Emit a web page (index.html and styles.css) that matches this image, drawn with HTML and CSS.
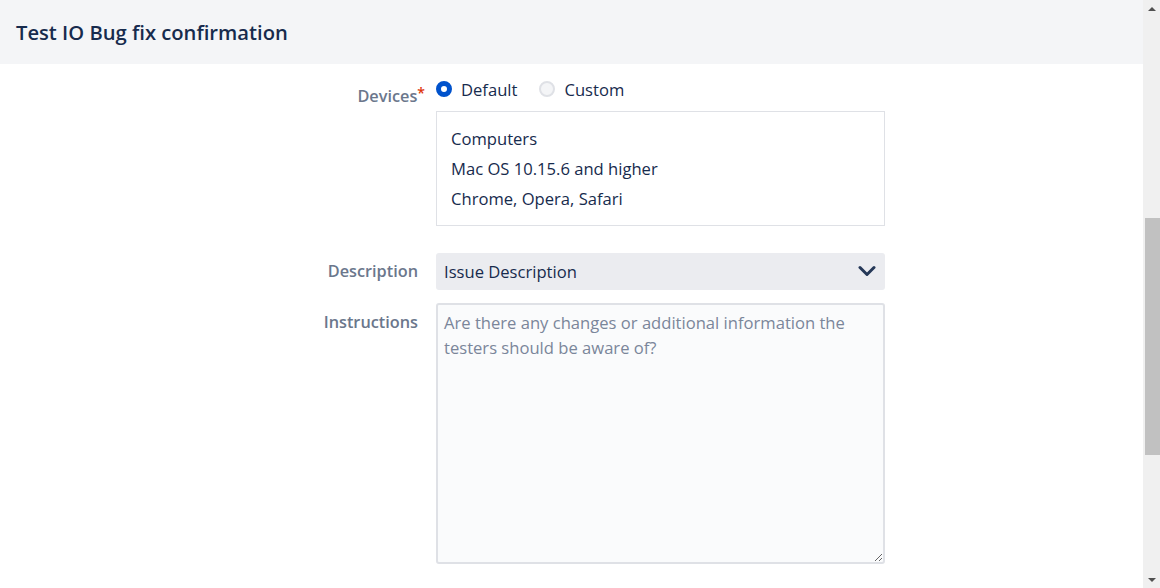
FILE: index.html
```html
<!DOCTYPE html>
<html lang="en">
<head>
<meta charset="utf-8">
<title>Test IO Bug fix confirmation</title>
<link rel="stylesheet" href="styles.css">
</head>
<body>
<div class="page">
  <div class="main">
    <header class="modal-header">
      <h1 class="title">Test IO Bug fix confirmation</h1>
    </header>
    <form class="form">
      <div class="row row-devices">
        <div class="label label-devices">Devices<span class="req">*</span></div>
        <div class="field">
          <div class="radios">
            <label class="radio"><span class="dot dot-on"></span><span>Default</span></label>
            <label class="radio"><span class="dot"></span><span>Custom</span></label>
          </div>
          <div class="device-box">
            <div>Computers</div>
            <div>Mac OS 10.15.6 and higher</div>
            <div>Chrome, Opera, Safari</div>
          </div>
        </div>
      </div>
      <div class="row row-desc">
        <div class="label label-desc">Description</div>
        <div class="field">
          <div class="select">
            <span>Issue Description</span>
            <svg class="chev" width="18" height="12" viewBox="0 0 18 12"><path d="M2 2.5 L9 9.5 L16 2.5" fill="none" stroke="#253858" stroke-width="3" stroke-linecap="round" stroke-linejoin="round"/></svg>
          </div>
        </div>
      </div>
      <div class="row row-instr">
        <div class="label label-instr">Instructions</div>
        <div class="field">
          <textarea class="textarea" placeholder="Are there any changes or additional information the testers should be aware of?"></textarea>
        </div>
      </div>
    </form>
  </div>
  <div class="scrollbar">
    <div class="sb-btn"><span class="arrow-up"></span></div>
    <div class="sb-track">
      <div class="sb-space-top"></div>
      <div class="sb-thumb"></div>
    </div>
    <div class="sb-btn"><span class="arrow-down"></span></div>
  </div>
</div>
</body>
</html>
```
FILE: styles.css
```css
* { box-sizing: border-box; }
html, body { margin: 0; padding: 0; }
body {
  font-family: "Open Sans", "Noto Sans", sans-serif;
  color: #172b4d;
  background: #fff;
}
.page {
  display: flex;
  width: 1160px;
  height: 588px;
  overflow: hidden;
}
.main {
  flex: 1;
  display: flex;
  flex-direction: column;
  background: #fff;
}
.modal-header {
  height: 64px;
  background: #f4f5f7;
  display: flex;
  align-items: center;
  padding-left: 16px;
}
.title {
  margin: 0;
  font-size: 20.2px;
  font-weight: 600;
  color: #172b4d;
}
.form {
  display: flex;
  flex-direction: column;
  padding-top: 15px;
}
.row {
  display: grid;
  grid-template-columns: 418px 449px;
  column-gap: 18px;
}
.label {
  text-align: right;
  font-size: 16.3px;
  font-weight: 600;
  color: #6b778c;
}
.label-devices { padding-top: 6px; margin-right: -7px; }
.req { color: #de350b; font-size: 14px; position: relative; top: -4px; }
.radios {
  display: flex;
  align-items: center;
  gap: 22px;
  height: 20px;
}
.radio {
  display: flex;
  align-items: center;
  gap: 9px;
  font-size: 16.6px;
  color: #172b4d;
}
.dot {
  width: 16px;
  height: 16px;
  border-radius: 50%;
  background: #f4f5f7;
  border: 2px solid #dfe1e6;
  display: inline-block;
}
.dot-on {
  background: #fff;
  border: 5px solid #0052cc;
}
.device-box {
  margin-top: 12px;
  border: 1px solid #dfe1e6;
  height: 115px;
  padding: 12px 14px;
  font-size: 16.6px;
  line-height: 30px;
  color: #172b4d;
}
.row-desc { margin-top: 27px; }
.label-desc { padding-top: 7px; }
.select {
  height: 37px;
  background: #ebecf0;
  border-radius: 3px;
  display: flex;
  align-items: center;
  justify-content: space-between;
  padding: 0 9px 0 8px;
  font-size: 16.6px;
  color: #172b4d;
}
.chev { margin-top: -2px; }
.row-instr { margin-top: 13px; }
.label-instr { padding-top: 8px; }
.textarea {
  display: block;
  width: 449px;
  height: 261px;
  background: #fafbfc;
  border: 2px solid #dfe1e6;
  border-radius: 3px;
  padding: 5px 6px;
  font-family: inherit;
  font-size: 16.6px;
  line-height: 25px;
  color: #172b4d;
  resize: vertical;
  outline: none;
}
.textarea::placeholder { color: #7a869a; }
.scrollbar {
  width: 17px;
  display: flex;
  flex-direction: column;
  background: #f0f0f0;
}
.sb-btn {
  height: 17px;
  display: flex;
  align-items: center;
  justify-content: center;
}
.arrow-up {
  width: 0; height: 0;
  border-left: 4px solid transparent;
  border-right: 4px solid transparent;
  border-bottom: 4px solid #505050;
}
.arrow-down {
  width: 0; height: 0;
  border-left: 4px solid transparent;
  border-right: 4px solid transparent;
  border-top: 4px solid #505050;
}
.sb-track { flex: 1; display: flex; flex-direction: column; }
.sb-space-top { height: 201px; }
.sb-thumb { height: 237px; margin-left: 2px; background: #c1c1c1; }
```
